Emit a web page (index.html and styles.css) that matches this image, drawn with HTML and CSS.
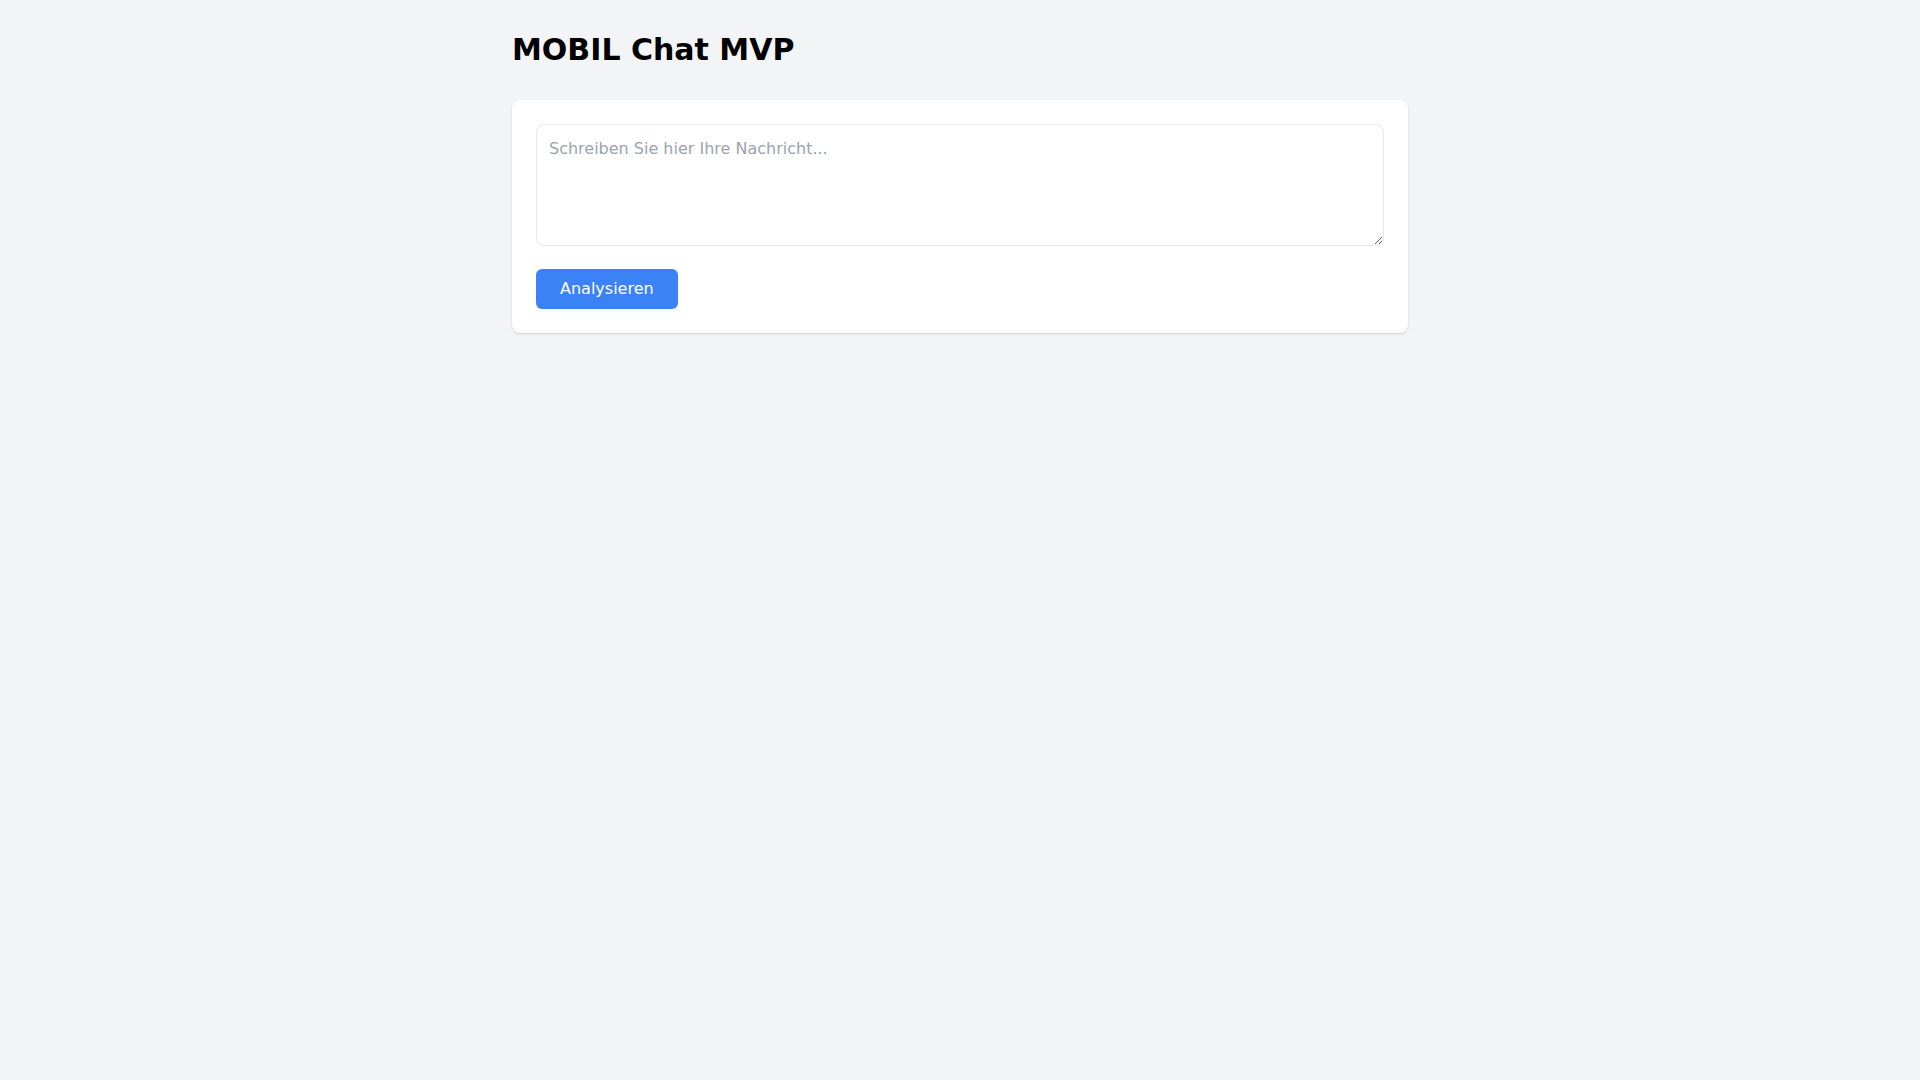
FILE: index.html
```html
<!DOCTYPE html>
<html lang="de">
<head>
    <meta charset="UTF-8">
    <meta name="viewport" content="width=device-width, initial-scale=1.0">
    <title>MOBIL Chat MVP</title>
    <link rel="stylesheet" href="styles.css">
</head>
<body>
    <div class="container">
        <h1 class="title">MOBIL Chat MVP</h1>
        <div class="card">
            <textarea class="message" rows="4" placeholder="Schreiben Sie hier Ihre Nachricht..."></textarea>
            <button class="analyze-btn">Analysieren</button>
        </div>
    </div>
</body>
</html>
```

FILE: styles.css
```css
body, html {
    margin: 0;
    padding: 0;
    background: #f3f4f6;
    font-family: 'DejaVu Sans', sans-serif;
}

.container {
    max-width: 896px;
    margin: 0 auto;
    padding: 32px 0;
}

.title {
    margin: 0 0 32px 0;
    font-size: 30px;
    line-height: 36px;
    font-weight: bold;
    color: #000;
}

.card {
    background: white;
    border-radius: 8px;
    padding: 24px;
    box-shadow: 0 1px 3px rgba(0,0,0,0.1), 0 1px 2px rgba(0,0,0,0.06);
}

.message {
    display: block;
    box-sizing: border-box;
    width: 100%;
    margin: 0 0 23px 0;
    padding: 12px;
    border: 1px solid #e5e7eb;
    border-radius: 8px;
    font-family: inherit;
    font-size: 16px;
    line-height: 24px;
    color: #111827;
    outline: none;
}

.message::placeholder {
    color: #9ca3af;
}

.analyze-btn {
    display: block;
    padding: 8px 24px;
    border: none;
    border-radius: 6px;
    background: #3b82f6;
    color: white;
    font-family: inherit;
    font-size: 16px;
    line-height: 24px;
    cursor: pointer;
}
```
